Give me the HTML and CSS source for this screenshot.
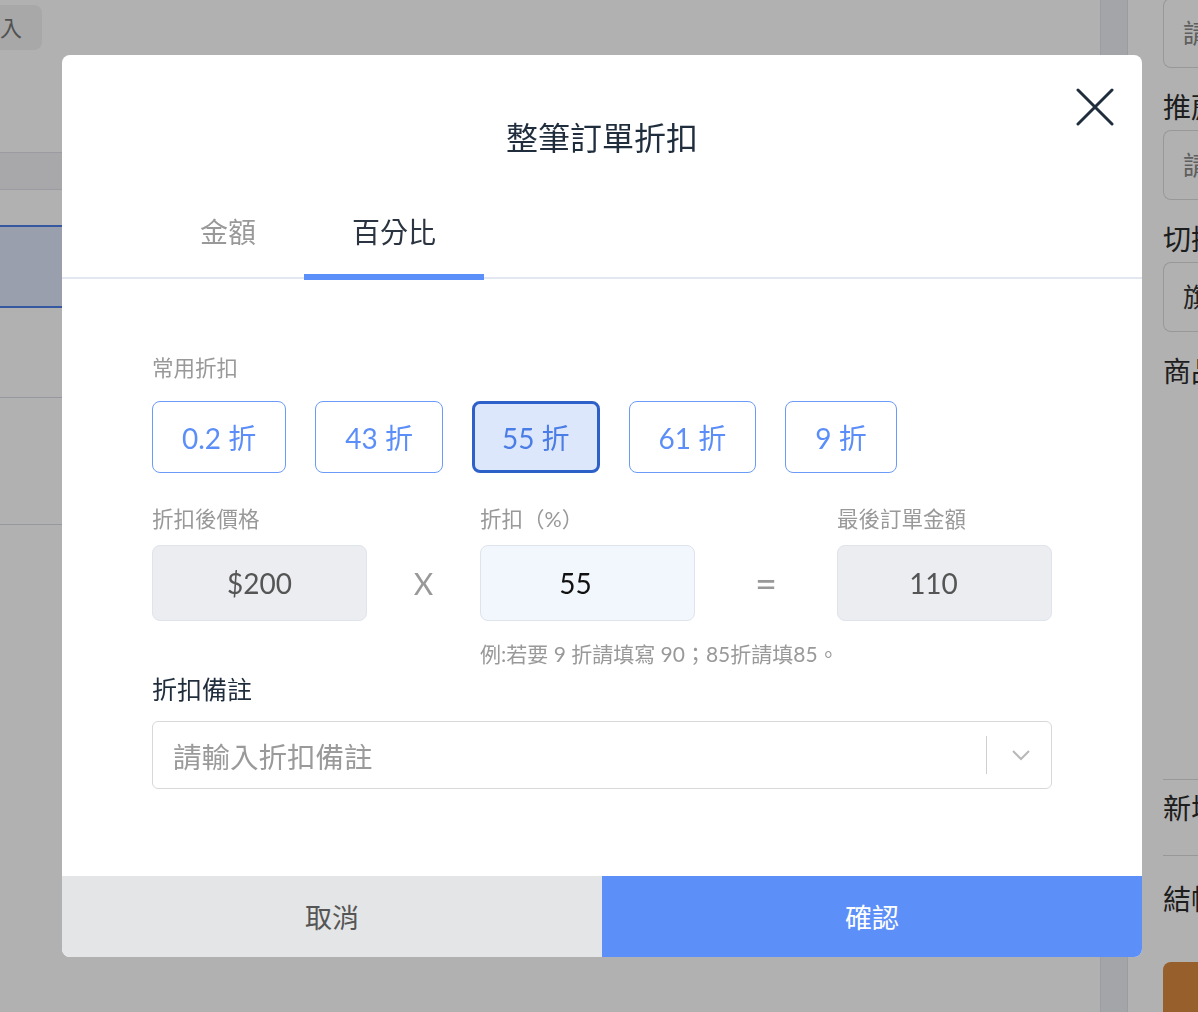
FILE: index.html
```html
<!DOCTYPE html>
<html lang="zh-Hant">
<head>
    <meta charset="UTF-8">
    <meta name="viewport" content="width=device-width, initial-scale=1.0">
    <title>整筆訂單折扣</title>
    <link rel="stylesheet" href="styles.css">
</head>
<body>

<!-- Page behind the dialog -->
<div class="page">
    <div class="main">
        <div class="top-btn">入</div>
        <div class="table">
            <div class="table-head"></div>
            <div class="table-row short"></div>
            <div class="table-row selected"></div>
            <div class="table-row mid"></div>
            <div class="table-row tall"></div>
        </div>
    </div>
    <div class="strip"></div>
    <div class="side">
        <div class="side-input first">請輸入</div>
        <div class="side-label">推薦人</div>
        <div class="side-input">請輸入</div>
        <div class="side-label">切換</div>
        <div class="side-input dark">旗艦店</div>
        <div class="side-label">商品</div>
        <div class="side-spacer"></div>
        <div class="side-item">新增</div>
        <div class="side-item last">結帳</div>
        <div class="side-orange"></div>
    </div>
</div>

<div class="overlay"></div>

<!-- Discount dialog -->
<div class="modal">
    <button class="close-btn" aria-label="close">
        <svg width="38" height="38" viewBox="0 0 38 38">
            <path d="M2 2 L36 36 M36 2 L2 36" stroke="#1f2d3d" stroke-width="3" stroke-linecap="round" fill="none"/>
        </svg>
    </button>

    <div class="modal-header">
        <h2 class="modal-title">整筆訂單折扣</h2>
    </div>

    <div class="tabs">
        <div class="tab">金額</div>
        <div class="tab active">百分比</div>
    </div>

    <div class="modal-body">
        <div class="field-label">常用折扣</div>
        <div class="chips">
            <button class="chip">0.2 折</button>
            <button class="chip">43 折</button>
            <button class="chip selected">55 折</button>
            <button class="chip">61 折</button>
            <button class="chip">9 折</button>
        </div>

        <div class="calc">
            <div class="field-label">折扣後價格</div>
            <div></div>
            <div class="field-label">折扣（%）</div>
            <div></div>
            <div class="field-label">最後訂單金額</div>

            <div class="box readonly">$200</div>
            <div class="op">X</div>
            <div class="box editable">55</div>
            <div class="op eq">=</div>
            <div class="box readonly total">110</div>

            <div class="hint">例:若要 9 折請填寫 90；85折請填85。</div>
        </div>

        <div class="note-label">折扣備註</div>
        <div class="select">
            <span class="placeholder">請輸入折扣備註</span>
            <span class="select-sep"></span>
            <svg class="chevron" width="20" height="12" viewBox="0 0 20 12">
                <path d="M2 2 L10 10 L18 2" stroke="#b8b8b8" stroke-width="2" fill="none"/>
            </svg>
        </div>
    </div>

    <div class="modal-footer">
        <button class="btn-cancel">取消</button>
        <button class="btn-confirm">確認</button>
    </div>
</div>

</body>
</html>
```

FILE: styles.css
```css
body {
    margin: 0;
    font-family: Lato, "Noto Sans CJK TC", sans-serif;
    background-color: #fff;
    overflow: hidden;
    height: 1012px;
}
button {
    font-family: inherit;
    cursor: pointer;
}

/* background page */
.page {
    display: flex;
    height: 1012px;
}
.main {
    width: 1100px;
    flex-shrink: 0;
}
.top-btn {
    width: 42px;
    height: 45px;
    margin-top: 5px;
    border-radius: 0 8px 8px 0;
    background-color: #f2f2f2;
    color: #777;
    font-size: 22px;
    line-height: 45px;
}
.table {
    margin-top: 102px;
}
.table-head {
    height: 36px;
    background-color: #f2f3f7;
    border-top: 1px solid #dfe1e8;
    border-bottom: 1px solid #dfe1e8;
}
.table-row.short {
    height: 35px;
}
.table-row.selected {
    height: 79px;
    background-color: #dde5f8;
    border-top: 2px solid #4f7fe8;
    border-bottom: 2px solid #4f7fe8;
}
.table-row.mid {
    height: 89px;
    border-bottom: 1px solid #d9dce6;
}
.table-row.tall {
    height: 126px;
    border-bottom: 1px solid #d9dce6;
}
.strip {
    width: 26px;
    flex-shrink: 0;
    background-color: #eceef2;
    border-left: 1px solid #e0e2e7;
    border-right: 1px solid #e0e2e7;
}
.side {
    flex: 1;
    min-width: 0;
    padding-left: 35px;
    display: flex;
    flex-direction: column;
}
.side-input {
    flex-shrink: 0;
    height: 68px;
    border: 1px solid #dcdcdc;
    border-right: none;
    border-radius: 8px 0 0 8px;
    padding-left: 19px;
    font-size: 26px;
    line-height: 68px;
    color: #8a8a8a;
    white-space: nowrap;
    overflow: hidden;
}
.side-input.first {
    margin-top: -2px;
}
.side-input.dark {
    color: #333;
}
.side-label {
    flex-shrink: 0;
    height: 43px;
    padding-top: 19px;
    font-size: 28px;
    line-height: 40px;
    color: #2a2a2a;
    white-space: nowrap;
    overflow: hidden;
}
.side-spacer {
    height: 385px;
    flex-shrink: 0;
}
.side-item {
    flex-shrink: 0;
    height: 75px;
    border-top: 1px solid #dcdcdc;
    font-size: 28px;
    line-height: 56px;
    color: #2a2a2a;
    white-space: nowrap;
    overflow: hidden;
}
.side-item.last {
    height: 106px;
    line-height: 86px;
}
.side-orange {
    flex-shrink: 0;
    height: 60px;
    border-radius: 8px 0 0 0;
    background-color: #d88a3e;
}

.overlay {
    position: fixed;
    inset: 0;
    background-color: rgba(0, 0, 0, 0.305);
}

/* dialog */
.modal {
    position: fixed;
    left: 62px;
    top: 55px;
    width: 1080px;
    height: 902px;
    background-color: #fff;
    border-radius: 8px;
    overflow: hidden;
    display: flex;
    flex-direction: column;
}
.close-btn {
    position: absolute;
    top: 33px;
    right: 28px;
    width: 38px;
    height: 38px;
    padding: 0;
    border: none;
    background: none;
}
.close-btn svg {
    display: block;
}
.modal-header {
    padding-top: 61px;
}
.modal-title {
    margin: 0;
    font-size: 32px;
    line-height: 44px;
    font-weight: normal;
    color: #1f2d3d;
    text-align: center;
}
.tabs {
    display: flex;
    padding: 0 90px;
    height: 117px;
    border-bottom: 2px solid #e2e7f1;
}
.tab {
    padding: 51px 48px 0;
    font-size: 28px;
    line-height: 42px;
    color: #999;
    box-sizing: border-box;
    height: 120px;
}
.tab.active {
    color: #2b3441;
    border-bottom: 6px solid #5b8ff9;
}
.modal-body {
    flex: 1;
    padding: 75px 90px 0;
}
.field-label {
    font-size: 21.5px;
    line-height: 28px;
    color: #999;
    white-space: nowrap;
}
.chips {
    display: flex;
    gap: 29px;
    margin-top: 19px;
}
.chip {
    height: 72px;
    padding: 0 29px;
    border: 1px solid #6b9af8;
    border-radius: 8px;
    background-color: #fff;
    color: #5b8ef8;
    font-size: 28px;
}
.chip.selected {
    padding: 0 27px;
    border: 3px solid #2d60c9;
    background-color: #dce7fb;
    color: #4a7de6;
}
.calc {
    display: grid;
    grid-template-columns: 215px 113px 215px 142px 215px;
    row-gap: 12px;
    margin-top: 32px;
}
.box {
    height: 76px;
    box-sizing: border-box;
    border: 1px solid #dfe3ec;
    border-radius: 8px;
    font-size: 28px;
    line-height: 74px;
    text-align: center;
}
.box.readonly {
    background-color: #ebedf0;
    color: #555;
}
.box.editable {
    background-color: #f2f6fd;
    color: #111;
    padding-right: 24px;
}
.box.total {
    padding-right: 22px;
}
.op {
    font-size: 30px;
    line-height: 76px;
    color: #999;
    text-align: center;
}
.op.eq {
    font-size: 38px;
}
.hint {
    grid-column: 3 / 6;
    margin-top: 7px;
    font-size: 21px;
    line-height: 28px;
    color: #999;
    white-space: nowrap;
}
.note-label {
    margin-top: 5px;
    font-size: 25px;
    line-height: 32px;
    color: #1f2d3d;
}
.select {
    margin-top: 16px;
    height: 68px;
    box-sizing: border-box;
    border: 1px solid #d8d8d8;
    border-radius: 6px;
    display: flex;
    align-items: center;
    padding: 0 20px;
}
.placeholder {
    flex: 1;
    font-size: 28.5px;
    color: #9a9a9a;
}
.select-sep {
    width: 1px;
    height: 38px;
    background-color: #cfcfcf;
    margin-right: 24px;
}
.modal-footer {
    display: flex;
    height: 81px;
}
.modal-footer button {
    flex: 1;
    border: none;
    font-size: 27px;
}
.btn-cancel {
    background-color: #e4e5e7;
    color: #555;
}
.btn-confirm {
    background-color: #5d8ff8;
    color: #fff;
}
```
